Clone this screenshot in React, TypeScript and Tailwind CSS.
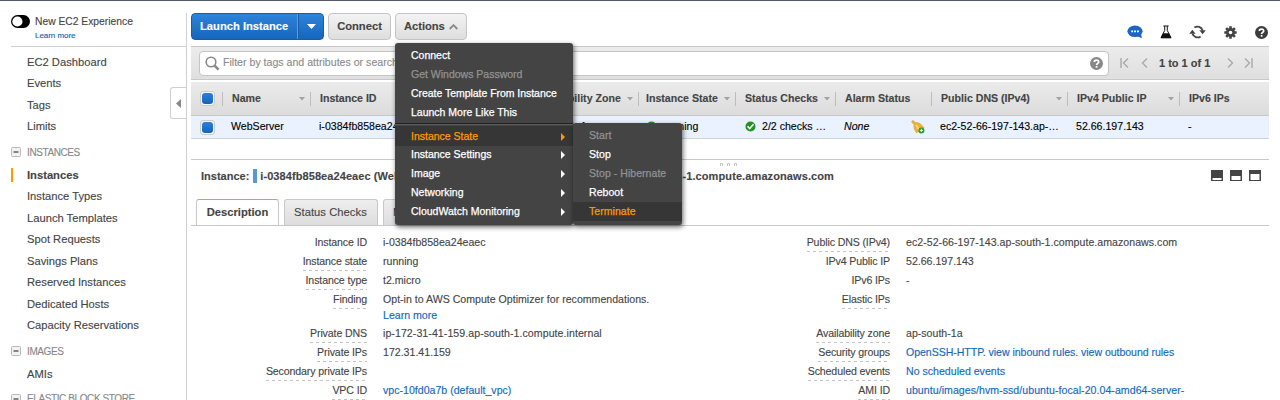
import React from "react";
import clsx from "clsx";

const Caret = () => (
  <svg className="ml-auto mr-[5px] shrink-0" width="6" height="4" viewBox="0 0 6 4">
    <path d="M0 0h6L3 3.6z" fill="#a2a2a2" />
  </svg>
);

const Checkbox = () => (
  <span className="flex size-[15px] shrink-0 items-center justify-center rounded-[3px] border border-[#cbcbcb] bg-[#f4f4f4]">
    <span className="size-[11px] rounded-[3px] bg-linear-to-b from-[#2c80d8] to-[#1364bb]" />
  </span>
);

type NavEntry = { label: string; kind?: "head" | "active"; h: string };

const nav: NavEntry[] = [
  { label: "EC2 Dashboard", h: "h-[22px]" },
  { label: "Events", h: "h-[21px]" },
  { label: "Tags", h: "h-[22px]" },
  { label: "Limits", h: "h-[21px]" },
  { label: "INSTANCES", kind: "head", h: "h-[30px]" },
  { label: "Instances", kind: "active", h: "h-[16px]" },
  { label: "Instance Types", h: "h-[27px]" },
  { label: "Launch Templates", h: "h-[16px]" },
  { label: "Spot Requests", h: "h-[27px]" },
  { label: "Savings Plans", h: "h-[16px]" },
  { label: "Reserved Instances", h: "h-[27px]" },
  { label: "Dedicated Hosts", h: "h-[16px]" },
  { label: "Capacity Reservations", h: "h-[27px]" },
  { label: "IMAGES", kind: "head", h: "h-[24px]" },
  { label: "AMIs", h: "h-[22px]" },
  { label: "ELASTIC BLOCK STORE", kind: "head", h: "h-[27px]" },
];

function Sidebar() {
  return (
    <aside className="relative mt-[12px] h-[387px] w-[187px] shrink-0 overflow-hidden border-r border-[#d0d0d0] pl-[11px]">
      <div className="flex h-[34px] gap-[5px] border-b border-[#d0d0d0]">
        <svg className="mt-[2px]" width="19" height="13" viewBox="0 0 19 13">
          <rect width="19" height="13" rx="6.5" fill="#000" />
          <circle cx="6.4" cy="6.5" r="5.1" fill="#fff" />
        </svg>
        <div className="whitespace-nowrap">
          <div className="mt-px h-[15px] text-[10.3px] leading-[15px] text-[#444]">New EC2 Experience</div>
          <div className="h-[13px] text-[8px] leading-[13px] tracking-[-0.05px] text-[#0b63b8]">Learn more</div>
        </div>
      </div>
      <nav className="pt-[4px]">
        {nav.map((n) => (
          <div key={n.label} className={clsx("flex items-center whitespace-nowrap text-[11.2px] text-[#444]", n.h)}>
            {n.kind === "head" && (
              <svg className="mr-[6px]" width="10" height="10" viewBox="0 0 10 10">
                <rect x=".5" y=".5" width="9" height="9" rx="1" fill="#f2f2f2" stroke="#b8b8b8" />
                <path d="M2.5 5h5" stroke="#555" strokeWidth="1.4" />
              </svg>
            )}
            {n.kind === "active" && <span className="mr-[14px] h-[14px] w-[2px] bg-[#f90]" />}
            <span
              className={clsx(
                n.kind === "head" && "text-[10px] tracking-[-0.4px] text-[#888]",
                n.kind === "active" && "font-bold",
                !n.kind && "pl-[16px]"
              )}
            >
              {n.label}
            </span>
          </div>
        ))}
      </nav>
      <div className="absolute right-0 top-[74px] flex h-[32px] w-[16px] items-center justify-center rounded-l-[3px] border border-r-0 border-[#d0d0d0] bg-white">
        <svg width="5" height="9" viewBox="0 0 5 9"><path d="M5 0v9L0 4.5z" fill="#888" /></svg>
      </div>
    </aside>
  );
}

function Help({ className, color }: { className?: string; color: string }) {
  return (
    <svg className={clsx("shrink-0", className)} width="13" height="13" viewBox="0 0 13 13">
      <circle cx="6.5" cy="6.5" r="6.5" fill={color} />
      <path d="M4.3 5.1C4.3 2.4 8.7 2.5 8.7 4.9 8.7 6.4 6.6 6.3 6.6 7.9" fill="none" stroke="#fff" strokeWidth="1.7" />
      <path d="M5.7 8.9h1.8v1.8H5.7z" fill="#fff" />
    </svg>
  );
}

function ToolIcons() {
  return (
    <div className="ml-auto mr-px mt-[6px] flex h-[28px] items-center">
      <svg width="16" height="14" viewBox="0 0 16 14">
        <ellipse cx="8" cy="6.3" rx="7.6" ry="5.8" fill="#1a66c2" />
        <path d="M10 11l4.8 2.3-.8-5z" fill="#1a66c2" />
        <path d="M4.2 5.4h1.9v1.8H4.2zM7.1 5.4H9v1.8H7.1zM10 5.4h1.9v1.8H10z" fill="#fff" />
      </svg>
      <svg className="ml-[17px]" width="12" height="14" viewBox="0 0 12 14">
        <path d="M3.3 1h5.4M4.7 1.2v4.3L1 12.6h10L7.3 5.5V1.2" fill="none" stroke="#111" strokeWidth="1" />
        <path d="M3.2 8.2h5.6l2.5 5H.7z" fill="#111" />
      </svg>
      <svg className="ml-[17px]" width="17" height="14" viewBox="0 0 17 14">
        <path d="M5.4 2.6A5.3 5.3 0 0 1 13.600 5.500M11.600 11.400A5.300 5.300 0 0 1 3.400 8.500" fill="none" stroke="#444" strokeWidth="1.800" />
        <path d="M10.400 5.200h6.400l-3.200 4zM.2 8.800h6.400l-3.200-4z" fill="#444" />
      </svg>
      <svg className="ml-[18px]" width="13" height="13" viewBox="0 0 13 13">
        <path d="M6.500 .3v12.400M.3 6.500h12.400M2.100 2.100l8.800 8.800M10.900 2.100l-8.800 8.800" stroke="#444" strokeWidth="2.600" />
        <circle cx="6.500" cy="6.500" r="4.500" fill="#444" />
        <circle cx="6.500" cy="6.500" r="1.800" fill="#fff" />
      </svg>
      <Help className="ml-[18px]" color="#3c3c3c" />
    </div>
  );
}

const grayButton = "flex h-[27px] items-center rounded-[4px] border border-[#c4c4c4] bg-linear-to-b from-[#f3f3f3] to-[#dedede] font-bold text-[#444]";

function Toolbar() {
  return (
    <div className="flex h-[34px] text-[11.2px]">
      <div className="mt-px flex h-[27px] w-[133px] rounded-[4px] border border-[#1b5ca5] bg-linear-to-b from-[#2d84da] to-[#1566bd] font-bold text-white">
        <div className="flex w-[106px] items-center whitespace-nowrap border-r border-[#5b9fe2] pl-[8px]">Launch Instance</div>
        <div className="flex flex-1 items-center justify-center border-l border-[#1b5ca5]">
          <svg width="9" height="5" viewBox="0 0 9 5"><path d="M0 0h9L4.500 5z" fill="#fff" /></svg>
        </div>
      </div>
      <div className={clsx(grayButton, "ml-[4px] mt-px w-[63px] justify-center")}>Connect</div>
      <div className={clsx(grayButton, "ml-[4px] mt-px w-[72px] pl-[8px] tracking-[-0.05px]")}>
        Actions
        <svg className="ml-[4px]" width="9" height="6" viewBox="0 0 9 6"><path d="M.7 5L4.500 1.200 8.300 5" fill="none" stroke="#888" strokeWidth="1.800" /></svg>
      </div>
      <ToolIcons />
    </div>
  );
}

function Pager({ d, className }: { d: string; className: string }) {
  return (
    <svg className={className} width="9" height="10" viewBox="0 0 9 10">
      <path d={d} fill="none" stroke="#aaa" strokeWidth="1.4" />
    </svg>
  );
}

function FilterBar() {
  return (
    <div className="flex h-[34px] items-center border-y border-[#c8c8c8] bg-linear-to-b from-[#ececec] to-[#dfdfdf] pl-[8px]">
      <div className="flex h-[25px] w-[910px] items-center rounded-[4px] border border-[#c4c4c4] bg-white pl-[5px] pr-[5px]">
        <svg width="15" height="15" viewBox="0 0 15 15">
          <circle cx="6" cy="6" r="4.8" fill="none" stroke="#888" strokeWidth="1.6" />
          <path d="M9.600 9.600l4 4" stroke="#888" strokeWidth="2.600" />
        </svg>
        <span className="ml-[3px] whitespace-nowrap text-[10.6px] text-[#8a8a8a]">Filter by tags and attributes or search by keyword</span>
        <Help className="ml-auto" color="#888" />
      </div>
      <Pager className="ml-[11px]" d="M1 0v10M8 .5L3.500 5 8 9.500" />
      <Pager className="ml-[11px]" d="M7 .5L2.500 5 7 9.500" />
      <span className="ml-[10px] w-[54px] whitespace-nowrap text-[11px] font-bold text-[#444]">1 to 1 of 1</span>
      <Pager className="ml-[13px]" d="M2 .5L6.500 5 2 9.500" />
      <Pager className="ml-[9px]" d="M1 .5L5.500 5 1 9.500M8 0v10" />
    </div>
  );
}

const columns = [
  { label: "Name", w: "w-[88px] pl-[9px]", caret: true },
  { label: "Instance ID", w: "w-[120px] pl-[9px]", caret: true },
  { label: "Instance Type", w: "w-[97px] pl-[9px]", caret: true },
  { label: "Availability Zone", w: "w-[111px] pl-[9px]", caret: true },
  { label: "Instance State", w: "w-[97px] pl-[7px]", caret: true },
  { label: "Status Checks", w: "w-[100px] pl-[9px]", caret: true },
  { label: "Alarm Status", w: "w-[96px] pl-[9px]", caret: false },
  { label: "Public DNS (IPv4)", w: "w-[136px] pl-[9px]", caret: true },
  { label: "IPv4 Public IP", w: "w-[112px] pl-[9px]", caret: true },
  { label: "IPv6 IPs", w: "w-[89px] pl-[9px]", caret: false },
];

const Ok = () => (
  <svg className="mr-[6px] shrink-0" width="11" height="11" viewBox="0 0 11 11">
    <circle cx="5.500" cy="5.500" r="5" fill="#219321" />
    <path d="M2.500 5.300l2.200 2.300 3.800-4.300" fill="none" stroke="#fff" strokeWidth="1.600" />
  </svg>
);

const Bell = () => (
  <svg className="ml-auto mr-[15px] shrink-0" width="14" height="14" viewBox="0 0 14 14">
    <path d="M.5 1.700L1.900 .4l2.700 2.200c2.600-.4 5.700 1.400 8.400 5.200L5.600 12.800C3.900 10.600 2.400 7.700 3 4.500z" fill="#f0b232" stroke="#c98a1c" strokeWidth=".5" />
    <path d="M5 5l3 4.500" stroke="#fbdc82" strokeWidth="1.600" />
    <circle cx="10.400" cy="10.400" r="3" fill="#2c9a2c" />
    <path d="M10.400 8.800v3.200M8.800 10.400H12" stroke="#fff" strokeWidth=".9" />
  </svg>
);

function Table() {
  return (
    <div className="mt-[2px] whitespace-nowrap text-[10.6px]">
      <div className="flex h-[34px] items-center border-b border-[#c8c8c8] bg-linear-to-b from-[#ebebeb] to-[#dcdcdc] pl-[9px] font-bold text-[#444]">
        <Checkbox />
        <div className="ml-[7px] flex">
          {columns.map((c) => (
            <div key={c.label} className={clsx("flex h-[14px] items-center border-l border-[#bdbdbd]", c.w)}>
              {c.label}
              {c.caret && <Caret />}
            </div>
          ))}
        </div>
      </div>
      <div className="flex h-[23px] items-center border-b border-[#ccd3dc] bg-[#e9f2fe] pl-[9px] text-black">
        <Checkbox />
        <span className="ml-[16px] w-[88px]">WebServer</span>
        <span className="w-[120px]">i-0384fb858ea24eaec</span>
        <span className="w-[97px]">t2.micro</span>
        <span className="w-[110px]">ap-south-1a</span>
        <span className="flex w-[99px] items-center"><Ok />running</span>
        <span className="flex w-[99px] items-center"><Ok />2/2 checks …</span>
        <span className="flex w-[96px] items-center"><i>None</i><Bell /></span>
        <span className="w-[136px]">ec2-52-66-197-143.ap-…</span>
        <span className="w-[112px]">52.66.197.143</span>
        <span>-</span>
      </div>
    </div>
  );
}

function PaneHeader() {
  return (
    <div className="mt-[20px] h-[40px] border-t border-[#c8c8c8]">
      <svg className="ml-[529px] mt-[3px]" width="20" height="3" viewBox="0 0 20 3">
        <path d="M.5 3V.5h2V3M7.500 3V.5h2V3M14.500 3V.5h2V3" fill="none" stroke="#c4c4c4" />
      </svg>
      <div className="flex h-[20px] items-center justify-between whitespace-nowrap pl-[10px] pr-[7px] text-[11px] font-bold text-[#444]">
        <div className="flex w-[633px] items-center">
          Instance:
          <span className="ml-[4px] mr-[3px] h-[14px] w-[4px] shrink-0 bg-[#5897d3]" />
          <span className="tracking-[0.08px]">i-0384fb858ea24eaec (WebServer)</span>
          <span className="ml-auto">Public DNS:</span>
          <span className="ml-auto tracking-[0.1px]">ec2-52-66-197-143.ap-south-1.compute.amazonaws.com</span>
        </div>
        <svg className="shrink-0" width="51" height="12" viewBox="0 0 51 12">
          <path d="M0 0h12v11H0zM19 0h12v11H19zM38 0h12v11H38z" fill="#444" />
          <path d="M1.500 8h9v2h-9zM20.500 6h9v4h-9zM39.500 4h9v6h-9z" fill="#fff" />
        </svg>
      </div>
    </div>
  );
}

function Tabs() {
  const idle = "flex h-[26px] items-center rounded-t-[3px] border border-b-0 border-[#c8c8c8] bg-linear-to-b from-[#eee] to-[#ddd] pl-[9px]";
  return (
    <div className="flex h-[27px] border-b border-[#c8c8c8] pl-[5px] text-[11.2px] text-[#444]">
      <div className="flex h-[26px] w-[83px] items-center justify-center rounded-t-[3px] border border-b-0 border-[#c8c8c8] border-t-[#f29a1f] bg-white font-bold">Description</div>
      <div className={clsx(idle, "ml-[5px] w-[94px] tracking-[0.05px]")}>Status Checks</div>
      <div className={clsx(idle, "ml-[5px] w-[76px]")}>Monitoring</div>
      <div className={clsx(idle, "ml-[5px] w-[46px]")}>Tags</div>
    </div>
  );
}

type Row = { label: string; plain?: boolean; tall?: boolean; value?: React.ReactNode };
const link = "text-[#0f66bd]";

const left: Row[] = [
  { label: "Instance ID", plain: true, value: "i-0384fb858ea24eaec" },
  { label: "Instance state", value: "running" },
  { label: "Instance type", value: "t2.micro" },
  { label: "Finding", tall: true, value: <>Opt-in to AWS Compute Optimizer for recommendations.<br /><span className={link}>Learn more</span></> },
  { label: "Private DNS", value: <span className="tracking-[0.06px]">ip-172-31-41-159.ap-south-1.compute.internal</span> },
  { label: "Private IPs", value: "172.31.41.159" },
  { label: "Secondary private IPs" },
  { label: "VPC ID", value: <span className={link}>vpc-10fd0a7b (default_vpc)</span> },
];

const right: Row[] = [
  { label: "Public DNS (IPv4)", value: <span className="tracking-[0.03px]">ec2-52-66-197-143.ap-south-1.compute.amazonaws.com</span> },
  { label: "IPv4 Public IP", plain: true, value: "52.66.197.143" },
  { label: "IPv6 IPs", plain: true, value: "-" },
  { label: "Elastic IPs", tall: true },
  { label: "Availability zone", value: "ap-south-1a" },
  { label: "Security groups", value: <span className="tracking-[-0.06px]"><span className={link}>OpenSSH-HTTP</span>. <span className={link}>view inbound rules</span>. <span className={link}>view outbound rules</span></span> },
  { label: "Scheduled events", value: <span className={link}>No scheduled events</span> },
  { label: "AMI ID", value: <span className="tracking-[0.04px] text-[#0f66bd]">ubuntu/images/hvm-ssd/ubuntu-focal-20.04-amd64-server-</span> },
];

function Details({ rows, labelWidth }: { rows: Row[]; labelWidth: string }) {
  return (
    <div className="w-[523px] shrink-0">
      {rows.map((r) => (
        <div key={r.label} className={clsx("flex items-start whitespace-nowrap text-[10.6px] leading-[16px] text-[#444]", r.tall ? "h-[34px]" : "h-[19px]")}>
          <div className={clsx("flex shrink-0 justify-end", labelWidth)}>
            <div className="tracking-[-0.12px]">
              {r.label}
              <div
                className={clsx(
                  "mt-px h-px",
                  !r.plain && "bg-[repeating-linear-gradient(90deg,#c4c4c4_0_3px,transparent_3px_6px)]"
                )}
              />
            </div>
          </div>
          <div className="ml-[16px]">{r.value}</div>
        </div>
      ))}
    </div>
  );
}

const Arrow = () => (
  <svg className="ml-auto" width="4" height="8" viewBox="0 0 4 8"><path d="M0 0v8l4-4z" fill="currentColor" /></svg>
);

function ActionsMenu() {
  const item = "flex h-[19px] items-center pl-[16px] pr-[8px]";
  return (
    <div className="absolute left-[395px] top-[42px] flex items-end whitespace-nowrap text-[10.5px] text-white [-webkit-text-stroke:0.25px]">
      <div className="h-[182px] w-[178px] rounded-[3px] bg-[#444] pt-[3px] shadow-[1px_2px_5px_rgba(0,0,0,0.6)]">
        <div className={item}>Connect</div>
        <div className={clsx(item, "text-[#929292]")}>Get Windows Password</div>
        <div className={clsx(item, "tracking-[-0.04px]")}>Create Template From Instance</div>
        <div className={item}>Launch More Like This</div>
        <div className="mt-[1px] h-[2px] border-b border-t border-b-[#5c5c5c] border-t-[#222]" />
        <div className={clsx(item, "mt-[1px] h-[20px] bg-[#363636] pt-[2px] text-[#f90]")}>Instance State<Arrow /></div>
        <div className="-mt-px">
          {["Instance Settings", "Image", "Networking", "CloudWatch Monitoring"].map((t) => (
            <div key={t} className={item}>{t}<Arrow /></div>
          ))}
        </div>
      </div>
      <div className="h-[102px] w-[109px] rounded-[3px] bg-[#444] pt-[3px] shadow-[1px_2px_5px_rgba(0,0,0,0.6)] tracking-[0.05px]">
        <div className={clsx(item, "text-[#929292]")}>Start</div>
        <div className={item}>Stop</div>
        <div className={clsx(item, "text-[#929292]")}>Stop - Hibernate</div>
        <div className={item}>Reboot</div>
        <div className={clsx(item, "bg-[#363636] text-[#f90]")}>Terminate</div>
      </div>
    </div>
  );
}

export default function App() {
  return (
    <div className="relative flex h-[400px] w-[1280px] overflow-hidden border-t border-[#545766] bg-white font-['Liberation_Sans',Arial,sans-serif] [-webkit-text-stroke:0.12px]">
      <Sidebar />
      <main className="ml-[4px] mt-[11px] w-[1078px]">
        <Toolbar />
        <FilterBar />
        <Table />
        <PaneHeader />
        <Tabs />
        <div className="mt-[8px] flex">
          <Details rows={left} labelWidth="w-[176px]" />
          <Details rows={right} labelWidth="w-[176px]" />
        </div>
      </main>
      <ActionsMenu />
    </div>
  );
}
